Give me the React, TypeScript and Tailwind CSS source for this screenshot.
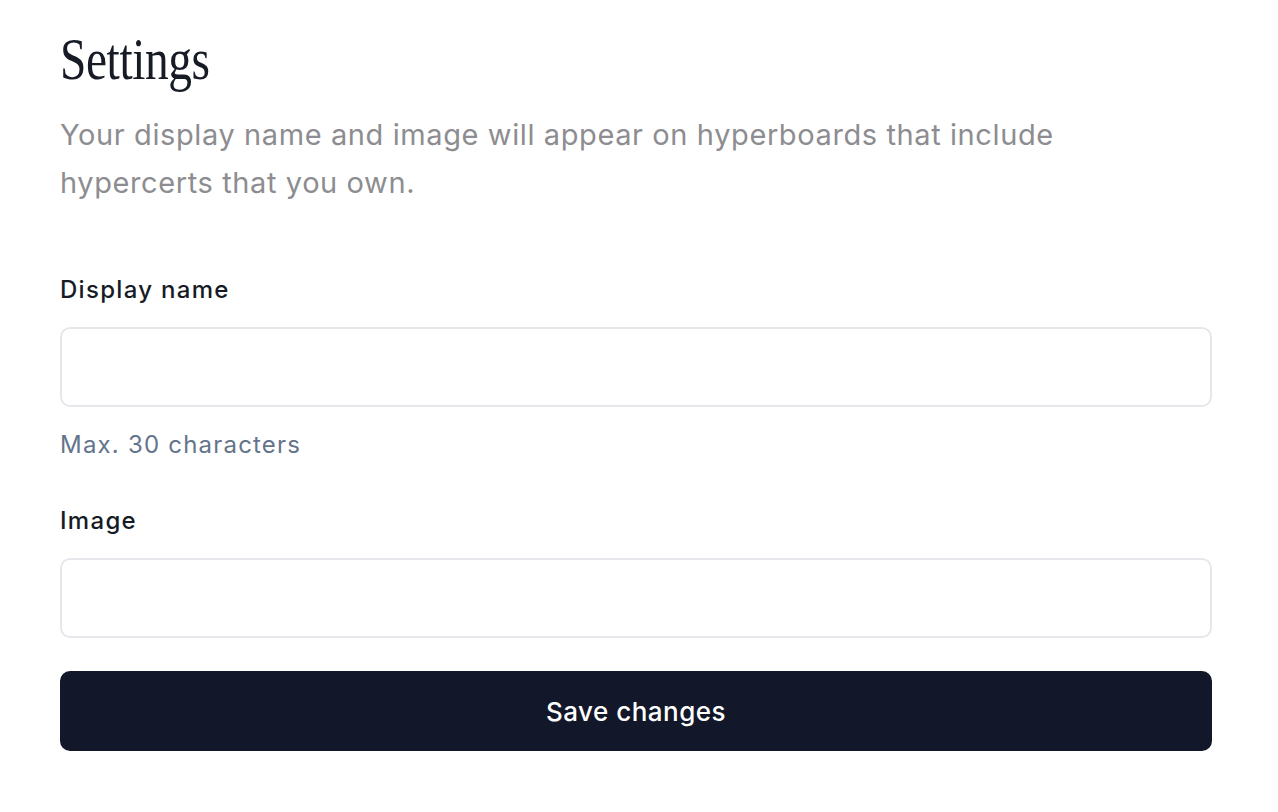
export default function App() {
  return (
    <div className="min-h-screen bg-white" style={{ fontFamily: "Inter, 'Noto Sans', sans-serif" }}>
      <div className="px-[60px] pt-[23px] w-[1272px]">
        <h1
          className="text-[60px] leading-[72px] text-[#161b26] origin-left scale-x-[0.79] inline-block tracking-[-0.5px]"
          style={{ fontFamily: "'Liberation Serif', 'DejaVu Serif', serif" }}
        >
          Settings
        </h1>
        <p className="mt-[16px] text-[29px] leading-[48px] tracking-[0.6px] text-[#8d8d91] max-w-[1030px]">
          Your display name and image will appear on hyperboards that include hypercerts that you own.
        </p>
        <div className="mt-[67px] flex flex-col">
          <label className="text-[24px] leading-[32px] font-medium tracking-[1.3px] text-[#161b26]">Display name</label>
          <input className="mt-[21px] h-[80px] w-[1152px] rounded-[10px] border-2 border-[#e5e7eb] bg-white px-4 outline-none" />
          <p className="mt-[22px] text-[24px] leading-[32px] tracking-[1.2px] text-[#64748b]">Max. 30 characters</p>
          <label className="mt-[44px] text-[24px] leading-[32px] font-medium tracking-[1.3px] text-[#161b26]">Image</label>
          <input className="mt-[21px] h-[80px] w-[1152px] rounded-[10px] border-2 border-[#e5e7eb] bg-white px-4 outline-none" />
          <button className="mt-[33px] h-[80px] w-[1152px] rounded-[10px] bg-[#121829] text-white text-[26px] tracking-[0.5px] font-medium">
            Save changes
          </button>
        </div>
      </div>
    </div>
  );
}
